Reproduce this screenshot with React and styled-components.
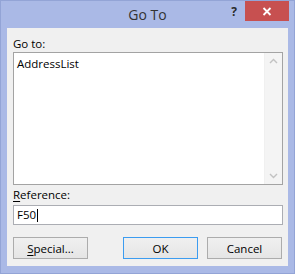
import React from 'react';
import styled, { createGlobalStyle } from 'styled-components';

const GlobalStyle = createGlobalStyle`
  body {
    margin: 0;
    background: #ffffff;
    font-family: "Open Sans", "Noto Sans", sans-serif;
  }
`;

const Window = styled.div`
  width: 295px;
  height: 274px;
  box-sizing: border-box;
  background: #aab9e6;
  border: 1px solid #93a4d6;
  display: flex;
  flex-direction: column;
`;

const TitleBar = styled.div`
  height: 29px;
  display: grid;
  grid-template-columns: 1fr auto 1fr;
  align-items: start;
`;

const Title = styled.div`
  grid-column: 2;
  margin-top: 4px;
  font-size: 14px;
  line-height: 20px;
  color: #333333;
`;

const Controls = styled.div`
  grid-column: 3;
  justify-self: end;
  display: flex;
  align-items: flex-start;
  margin-right: 5px;
`;

const HelpButton = styled.div`
  width: 18px;
  height: 20px;
  font-size: 12px;
  font-weight: 700;
  line-height: 22px;
  text-align: center;
  color: #2b2b2b;
  margin-right: 2px;
`;

const CloseButton = styled.div`
  width: 44px;
  height: 20px;
  background: #c75050;
  display: flex;
  align-items: center;
  justify-content: center;
`;

const Client = styled.div`
  flex: 1;
  margin: 0 6px 7px 6px;
  background: #f0f0f0;
  padding: 8px 5px 7px 6px;
  display: flex;
  flex-direction: column;
  font-size: 11.5px;
  color: #000;
`;

const Label = styled.div`
  height: 16px;
  line-height: 16px;
  margin-top: ${props => props.top || 0}px;
`;

const Key = styled.span`
  text-decoration: underline;
  text-underline-offset: 2px;
`;

const ListBox = styled.div`
  height: 133px;
  box-sizing: border-box;
  border: 1px solid #a3a3a3;
  background: #ffffff;
  display: flex;
`;

const ListItems = styled.div`
  flex: 1;
  padding: 3px 0 0 3px;
  line-height: 15px;
`;

const ScrollBar = styled.div`
  width: 17px;
  background: #f4f4f4;
  border-left: 1px solid #f0f0f0;
  display: flex;
  flex-direction: column;
  justify-content: space-between;
  align-items: center;
  padding: 5px 0 5px;
`;

const TextBox = styled.div`
  margin-top: 2px;
  height: 20px;
  box-sizing: border-box;
  border: 1px solid #abadb3;
  background: #ffffff;
  padding: 0 3px;
  line-height: 18px;
  display: flex;
  align-items: center;
`;

const Caret = styled.span`
  display: inline-block;
  width: 1px;
  height: 13px;
  background: #000;
  margin-left: 1px;
`;

const ButtonRow = styled.div`
  margin-top: 12px;
  display: flex;
  align-items: center;
`;

const Button = styled.div`
  width: 75px;
  height: 22px;
  box-sizing: border-box;
  border: 1px solid ${props => (props.primary ? '#3c9cf0' : '#acacac')};
  background: linear-gradient(#f0f0f0, #e5e5e5);
  display: flex;
  align-items: center;
  justify-content: center;
  margin-left: ${props => props.gap || 0}px;
`;

const Chevron = ({ up }) => (
  <svg width="9" height="6" viewBox="0 0 9 6">
    <path
      d={up ? 'M1 5 L4.5 1.5 L8 5' : 'M1 1 L4.5 4.5 L8 1'}
      fill="none"
      stroke="#c2c2c2"
      strokeWidth="1.4"
    />
  </svg>
);

export default function App() {
  return (
    <>
      <GlobalStyle />
      <Window>
        <TitleBar>
          <Title>Go To</Title>
          <Controls>
            <HelpButton>?</HelpButton>
            <CloseButton>
              <svg width="10" height="9" viewBox="0 0 10 9">
                <path d="M1.5 1 L8.5 8 M8.5 1 L1.5 8" stroke="#ffffff" strokeWidth="1.8" />
              </svg>
            </CloseButton>
          </Controls>
        </TitleBar>
        <Client>
          <Label>Go to:</Label>
          <ListBox>
            <ListItems>AddressList</ListItems>
            <ScrollBar>
              <Chevron up />
              <Chevron />
            </ScrollBar>
          </ListBox>
          <Label top={2}>
            <Key>R</Key>eference:
          </Label>
          <TextBox>
            F50<Caret />
          </TextBox>
          <ButtonRow>
            <Button>
              <span>
                <Key>S</Key>pecial...
              </span>
            </Button>
            <Button primary gap={35}>OK</Button>
            <Button gap={9}>Cancel</Button>
          </ButtonRow>
        </Client>
      </Window>
    </>
  );
}
